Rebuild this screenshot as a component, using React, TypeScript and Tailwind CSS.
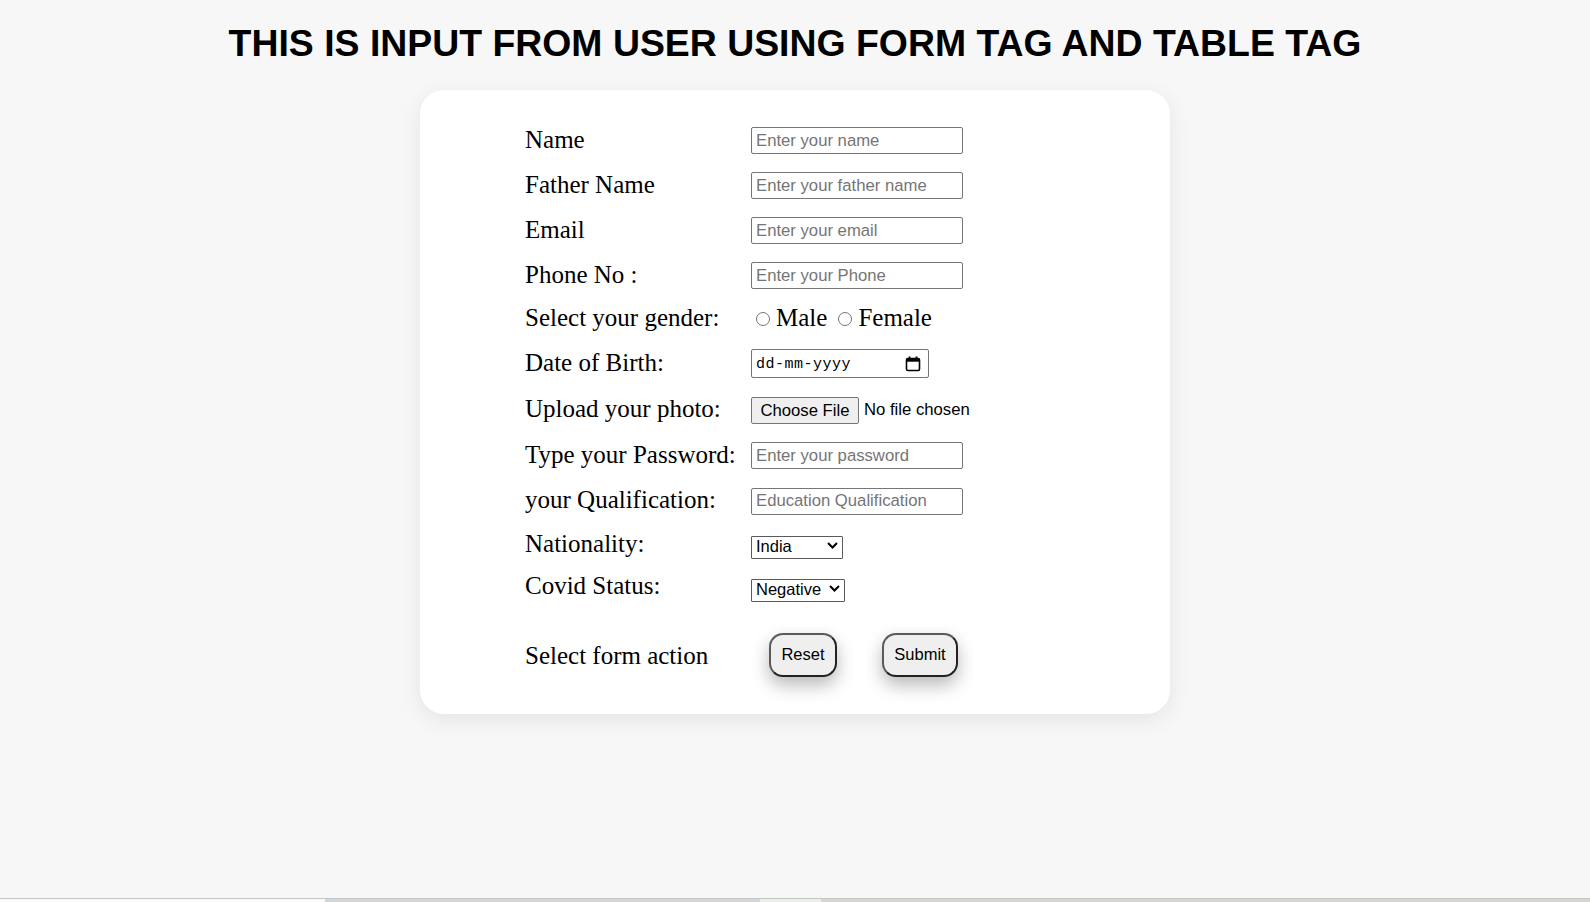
import { useState } from 'react';

const serif = "font-['Liberation_Serif','Times_New_Roman',serif]";
const sans = "font-['Liberation_Sans',Arial,sans-serif]";
const textInput =
  "w-[212px] h-[27px] border border-[#767676] rounded-[2px] bg-white px-[4px] text-[16.7px] text-black placeholder:text-[#757575] outline-none font-['Liberation_Sans',Arial,sans-serif]";
const radio =
  'appearance-none w-[14px] h-[14px] rounded-full border border-[#767676] bg-white checked:border-[4px] checked:border-[#0075ff]';

function Row({ label, h, children, labelClass = 'pb-[3px]' }: { label: string; h: string; children: React.ReactNode; labelClass?: string }) {
  return (
    <div className={`flex items-center ${h}`}>
      <label className={`w-[226px] shrink-0 text-[25px] leading-[29px] text-black ${serif} ${labelClass}`}>{label}</label>
      <div className="flex items-center">{children}</div>
    </div>
  );
}

function CalendarIcon() {
  return (
    <svg width="16" height="16" viewBox="0 0 16 16" fill="none">
      <path d="M4.5 0.5v3M11.5 0.5v3" stroke="#000" strokeWidth="1.8" />
      <rect x="1.5" y="2.5" width="13" height="12" rx="1.5" stroke="#000" strokeWidth="1.6" />
      <rect x="1.5" y="2.5" width="13" height="3.2" fill="#000" />
    </svg>
  );
}

function Chevron() {
  return (
    <svg width="11" height="7" viewBox="0 0 11 7" fill="none">
      <path d="M1 1l4.5 4.5L10 1" stroke="#000" strokeWidth="2" />
    </svg>
  );
}

function Select({ w, options }: { w: string; options: string[] }) {
  const [value, setValue] = useState(options[0]);
  return (
    <div className={`relative ${w} h-[23px]`}>
      <select
        value={value}
        onChange={(e) => setValue(e.target.value)}
        className={`appearance-none w-full h-full border border-[#5a5a5a] rounded-[1px] bg-white pl-[4px] pb-[3px] leading-[18px] text-[16.5px] text-black outline-none ${sans}`}
      >
        {options.map((o) => (
          <option key={o}>{o}</option>
        ))}
      </select>
      <span className="pointer-events-none absolute right-[5px] top-[8px]">
        <Chevron />
      </span>
    </div>
  );
}

export default function App() {
  const [gender, setGender] = useState('');

  return (
    <div className="min-h-screen flex flex-col bg-[#f7f7f7]">
      <main className="flex-1">
        <h1 className={`mt-[22px] text-center font-bold text-[37.4px] leading-[42px] text-black ${sans}`}>
          THIS IS INPUT FROM USER USING FORM TAG AND TABLE TAG
        </h1>

        <form
          className="mx-auto mt-[26px] w-[750px] h-[624px] rounded-3xl bg-white pl-[105px] pt-[28px] shadow-[0_6px_22px_rgba(0,0,0,0.08)]"
          onSubmit={(e) => e.preventDefault()}
        >
          <Row label="Name" h="h-[45px]">
            <input className={textInput} placeholder="Enter your name" />
          </Row>
          <Row label="Father Name" h="h-[45px]">
            <input className={textInput} placeholder="Enter your father name" />
          </Row>
          <Row label="Email" h="h-[45px]">
            <input className={textInput} type="email" placeholder="Enter your email" />
          </Row>
          <Row label="Phone No :" h="h-[45px]">
            <input className={textInput} placeholder="Enter your Phone" />
          </Row>
          <Row label="Select your gender:" h="h-[41px]">
            <div className={`flex items-center text-[25px] leading-[29px] text-black ${serif}`}>
              <input
                type="radio"
                name="gender"
                checked={gender === 'male'}
                onChange={() => setGender('male')}
                className={`ml-[5px] mr-[6px] ${radio}`}
              />
              <span className="pb-[3px]">Male</span>
              <input
                type="radio"
                name="gender"
                checked={gender === 'female'}
                onChange={() => setGender('female')}
                className={`ml-[11px] mr-[6px] ${radio}`}
              />
              <span className="pb-[3px]">Female</span>
            </div>
          </Row>
          <Row label="Date of Birth:" h="h-[49px]">
            <div className="w-[178px] h-[29px] border border-[#767676] rounded-[2px] bg-white flex items-center justify-between pl-[4px] pr-[7px]">
              <span className="pt-[3px] text-[15px] tracking-[0.5px] text-black font-['Liberation_Mono','DejaVu_Sans_Mono',monospace]">dd-mm-yyyy</span>
              <CalendarIcon />
            </div>
          </Row>
          <Row label="Upload your photo:" h="h-[44px]">
            <div className={`flex items-center text-[16.7px] text-black ${sans}`}>
              <button type="button" className="w-[108px] h-[27px] border border-[#767676] rounded-[2px] bg-[#efefef]">
                Choose File
              </button>
              <span className="ml-[5px]">No file chosen</span>
            </div>
          </Row>
          <Row label="Type your Password:" h="h-[47px]">
            <input className={textInput} type="password" placeholder="Enter your password" />
          </Row>
          <Row label="your Qualification:" h="h-[44px]">
            <input className={textInput} placeholder="Education Qualification" />
          </Row>
          <Row label="Nationality:" h="h-[45px]" labelClass="pb-[5px]">
            <Select w="w-[92px]" options={['India', 'Other']} />
          </Row>
          <Row label="Covid Status:" h="h-[41px]" labelClass="pb-[6px]">
            <Select w="w-[94px]" options={['Negative', 'Positive']} />
          </Row>
          <Row label="Select form action" h="h-[91px]" labelClass="pt-[1px]">
            <div className={`flex items-center text-[16.5px] text-black ${sans}`}>
              <button
                type="reset"
                className="ml-[18px] w-[68px] h-[44px] rounded-[14px] border-2 border-[#5a5a5a] border-b-[#222] border-r-[#222] bg-[#efefef] shadow-[0_8px_18px_rgba(0,0,0,0.28)]"
              >
                Reset
              </button>
              <button
                type="submit"
                className="ml-[45px] w-[76px] h-[44px] rounded-[14px] border-2 border-[#5a5a5a] border-b-[#222] border-r-[#222] bg-[#efefef] shadow-[0_8px_18px_rgba(0,0,0,0.28)]"
              >
                Submit
              </button>
            </div>
          </Row>
        </form>
      </main>

      <footer className="h-[4px] flex flex-col">
        <div className="h-px bg-[#c6c6c6]" />
        <div className="flex flex-1">
          <div className="w-[325px] bg-[#fafafa]" />
          <div className="w-[435px] bg-[#d3d7da]" />
          <div className="w-[61px] bg-[#eceeec]" />
          <div className="flex-1 bg-[#d6d7d5]" />
        </div>
      </footer>
    </div>
  );
}
